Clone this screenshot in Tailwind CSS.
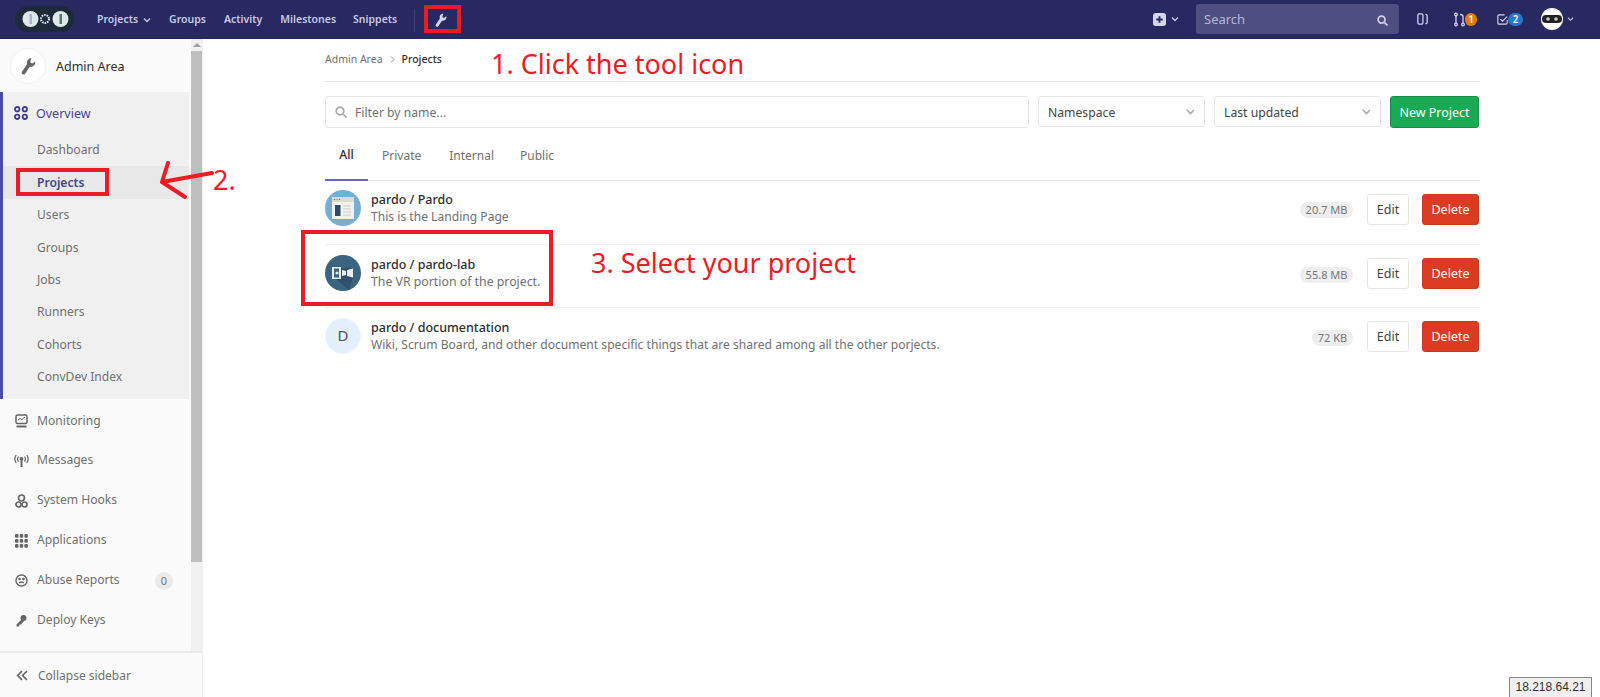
<!DOCTYPE html>
<html><head><meta charset="utf-8"><title>Projects</title>
<script src="https://cdn.jsdelivr.net/npm/@tailwindcss/browser@4"></script></head>
<body class="font-['Noto_Sans','Open_Sans',sans-serif] bg-white overflow-hidden">
<div class="relative w-[1600px] h-[697px] overflow-hidden">
<header class="h-[39px] bg-[#292961] border-b border-[#24245a] flex items-center text-[#c8c8e6] text-[10.500px] font-semibold">
  <svg class="ml-[15px] w-[59px] h-[26px]" viewBox="0 0 59 26"><rect width="59" height="26" rx="13" fill="#1c2a3a"/><circle cx="15.500" cy="13" r="8" fill="#dfe9e8"/><circle cx="45.500" cy="13" r="8" fill="#dfe9e8"/><rect x="14.500" y="8" width="2.500" height="10" fill="#a9b4d8"/><rect x="44.500" y="8" width="2.500" height="10" fill="#4f7a6e"/><circle cx="30" cy="13" r="4" fill="none" stroke="#eef" stroke-width="2" stroke-dasharray="1.500 1"/></svg>
  <nav class="ml-[23px] pt-[2px] flex items-center">
    <span class="flex items-center gap-[5px]">Projects<svg class="w-[8px] h-[6px]" viewBox="0 0 8 6" fill="none" stroke="currentColor" stroke-width="1.300"><path d="M1 1.500l3 3 3-3"/></svg></span>
    <span class="ml-[18px]">Groups</span><span class="ml-[18px]">Activity</span><span class="ml-[18px]">Milestones</span><span class="ml-[17px]">Snippets</span>
    <span class="ml-[17px] w-px h-[23px] bg-[#40407a]"></span>
    <svg class="ml-[20px] w-[12px] h-[14px]" viewBox="0 0 13 15" fill="#d5d5ee"><path d="M9 .5a4 4 0 0 0-3.700 5.300L1 12.300a1.600 1.600 0 0 0 2.600 1.900l3.900-6a4 4 0 0 0 4.800-4.700L9.700 5.300 8 4.200l1-3.700z"/></svg>
  </nav>
  <div class="ml-auto flex items-center">
    <svg class="w-[13px] h-[13px]" viewBox="0 0 14 14"><rect width="14" height="14" rx="3" fill="#d5d5ee"/><path d="M7 3.500v7M3.500 7h7" stroke="#292961" stroke-width="2"/></svg>
    <svg class="ml-[5px] w-[8px] h-[6px]" viewBox="0 0 8 6" fill="none" stroke="#c8c8e6" stroke-width="1.300"><path d="M1 1.500l3 3 3-3"/></svg>
    <div class="ml-[17px] w-[203px] h-[30px] rounded-[3px] bg-[#4e4e80] flex items-center justify-between pl-[8px] pr-[11px] pt-[2px] text-[#b5b5d8] text-[13px] font-normal">Search
      <svg class="w-[11px] h-[11px]" viewBox="0 0 12 12" fill="none" stroke="#d0d0e6" stroke-width="1.800"><circle cx="5" cy="5" r="3.800"/><path d="M8 8l3.500 3.500"/></svg></div>
    <svg class="ml-[18px] w-[11px] h-[14px]" viewBox="0 0 13 14" fill="none" stroke="#d5d5ee" stroke-width="1.500"><rect x="1" y="1" width="6" height="12" rx="1.500"/><path d="M10 1.500c1.500 0 2 .5 2 1.500v8c0 1-.5 1.500-2 1.500"/></svg>
    <svg class="ml-[26px] w-[11px] h-[15px]" viewBox="0 0 11 15" fill="none" stroke="#d5d5ee" stroke-width="1.300"><circle cx="2" cy="2.500" r="1.300"/><circle cx="2" cy="12.500" r="1.300"/><circle cx="9" cy="12.500" r="1.300"/><path d="M2 4v7M9 11V4.500C9 3 8 2.500 6 2.500"/></svg>
    <span class="w-[12px] h-[13px] rounded-full bg-[#e07b10] text-white text-[10px] leading-[13px] text-center">1</span>
    <svg class="ml-[20px] w-[11px] h-[13px]" viewBox="0 0 13 13" fill="none" stroke="#d5d5ee" stroke-width="1.300"><path d="M12 7v3.500a1.500 1.500 0 0 1-1.500 1.500h-8A1.500 1.500 0 0 1 1 10.500v-8A1.500 1.500 0 0 1 2.500 1H9"/><path d="M4 6l2.500 2.500L12 3"/></svg>
    <span class="w-[15px] h-[13px] rounded-full bg-[#1f78d1] text-white text-[10px] leading-[13px] text-center">2</span>
    <svg class="ml-[18px] w-[22px] h-[22px]" viewBox="0 0 22 22"><circle cx="11" cy="11" r="11" fill="#fff"/><rect x="1" y="7" width="20" height="8" rx="4" fill="#222"/><circle cx="7" cy="11" r="1.800" fill="#ccc"/><circle cx="15" cy="11" r="1.800" fill="#ccc"/></svg>
    <svg class="ml-[4px] mr-[26px] w-[7px] h-[6px]" viewBox="0 0 8 6" fill="none" stroke="#c8c8e6" stroke-width="1.300"><path d="M1 1.500l3 3 3-3"/></svg>
  </div>
</header>
<div class="flex h-[658px]">
  <aside class="w-[203px] shrink-0 h-full border-r border-[#f0f0f0] flex flex-col bg-[#fafafa] text-[12.100px] text-[#707070]">
    <div class="flex flex-1 min-h-0">
      <div class="w-[189px] flex flex-col">
        <div class="h-[53px] flex items-center pl-[10px] pt-[1px] gap-[10px] text-[#2e2e2e] text-[12.500px]">
          <span class="w-[36px] h-[36px] rounded-full bg-white border border-[#f0f0f0] flex items-center justify-center"><svg class="w-[15px] h-[18px]" viewBox="0 0 13 15" fill="#666"><path d="M9 .5a4 4 0 0 0-3.700 5.300L1 12.300a1.600 1.600 0 0 0 2.600 1.900l3.900-6a4 4 0 0 0 4.800-4.700L9.700 5.300 8 4.200l1-3.700z"/></svg></span>
          <span class="pt-[2px]">Admin Area</span></div>
        <div class="h-[307px] bg-[#f0f0f0] border-l-[3px] border-[#4b4ba3] flex flex-col">
          <div class="h-[41px] flex items-center pl-[11px] pt-[1px] gap-[8px] text-[#45458f] text-[12.500px]"><svg class="w-[14px] h-[14px]" viewBox="0 0 14 14" fill="none" stroke="#3d3d85" stroke-width="1.800"><circle cx="3.200" cy="3.200" r="2.200"/><circle cx="10.800" cy="3.200" r="2.200"/><circle cx="3.200" cy="10.800" r="2.200"/><circle cx="10.800" cy="10.800" r="2.200"/></svg><span class="pt-[2px]">Overview</span></div>
          <div class="h-[32.500px] flex items-center pt-[2px] pl-[34px]">Dashboard</div>
          <div class="h-[33px] flex items-center pt-[2px] pl-[34px] bg-[#e8e8e8] text-[#45458f] font-semibold">Projects</div>
          <div class="h-[32.500px] flex items-center pl-[34px]">Users</div>
          <div class="h-[32.500px] flex items-center pt-[2px] pl-[34px]">Groups</div>
          <div class="h-[32.500px] flex items-center pl-[34px]">Jobs</div>
          <div class="h-[32.500px] flex items-center pl-[34px]">Runners</div>
          <div class="h-[32.500px] flex items-center pl-[34px]">Cohorts</div>
          <div class="h-[32.500px] flex items-center pl-[34px]">ConvDev Index</div>
        </div>
        <div class="flex flex-col pl-[15px] pt-[2px]">
          <div class="h-[40px] flex items-center gap-[9px]"><svg class="w-[13px] h-[14px] shrink-0" viewBox="0 0 13 14" fill="none" stroke="#666" stroke-width="1.500"><rect x="1" y="1" width="11" height="8.500" rx="1.500"/><path d="M3 6l2-1.500 2 1 3-2.500" stroke-width="1"/><path d="M1.500 12.500h10" stroke-width="2"/></svg>Monitoring</div>
          <div class="h-[39px] flex items-center gap-[8px] -ml-[1px]"><svg class="w-[15px] h-[14px] shrink-0" viewBox="0 0 15 14" fill="none" stroke="#666" stroke-width="1.200"><circle cx="7.500" cy="5" r="1.300" fill="#666"/><path d="M7.500 7v6" stroke-width="2"/><path d="M4.500 2.500a4 4 0 0 0 0 5M10.500 2.500a4 4 0 0 1 0 5M2.200 1a7 7 0 0 0 0 8M12.800 1a7 7 0 0 1 0 8"/></svg>Messages</div>
          <div class="h-[41px] flex items-center gap-[9px]"><svg class="w-[13px] h-[14px] shrink-0" viewBox="0 0 13 14" fill="none" stroke="#666" stroke-width="1.700"><circle cx="6.500" cy="4" r="3"/><circle cx="3.500" cy="10.500" r="2.500"/><circle cx="9.500" cy="10.500" r="2.500"/></svg>System Hooks</div>
          <div class="h-[39px] flex items-center gap-[9px]"><svg class="w-[13px] h-[14px] shrink-0" viewBox="0 0 13 14" fill="#666"><rect x="0" y="0" width="3.500" height="3.800" rx="1"/><rect x="4.700" y="0" width="3.500" height="3.800" rx="1"/><rect x="9.400" y="0" width="3.500" height="3.800" rx="1"/><rect x="0" y="5" width="3.500" height="3.800" rx="1"/><rect x="4.700" y="5" width="3.500" height="3.800" rx="1"/><rect x="9.400" y="5" width="3.500" height="3.800" rx="1"/><rect x="0" y="10" width="3.500" height="3.800" rx="1"/><rect x="4.700" y="10" width="3.500" height="3.800" rx="1"/><rect x="9.400" y="10" width="3.500" height="3.800" rx="1"/></svg>Applications</div>
          <div class="h-[41px] flex items-center gap-[9px]"><svg class="w-[13px] h-[13px] shrink-0" viewBox="0 0 13 13" fill="none" stroke="#666" stroke-width="1.400"><circle cx="6.500" cy="6.500" r="5.500"/><circle cx="4.500" cy="5" r=".6" fill="#666"/><circle cx="8.500" cy="5" r=".6" fill="#666"/><path d="M4.200 9c1.300-1.200 3.300-1.200 4.600 0"/></svg>Abuse Reports<span class="ml-auto mr-[16px] w-[18px] h-[18px] rounded-full bg-[#eaeaea] text-[11px] text-[#777] text-center leading-[18px]">0</span></div>
          <div class="h-[39px] flex items-center gap-[9px]"><svg class="w-[13px] h-[13px] shrink-0" viewBox="0 0 13 13" fill="#666"><circle cx="8.500" cy="4" r="3"/><path d="M7 5L1.500 10.500V12.500h2.500l.5-2h1.500L9 7z"/></svg>Deploy Keys</div>
        </div>
      </div>
      <div class="ml-[2px] w-[11px] bg-[#f0f0f0] flex flex-col">
        <div class="h-[12px] flex items-center justify-center"><span class="w-0 h-0 border-x-[4px] border-x-transparent border-b-[4px] border-b-[#a0a0a0]"></span></div>
        <div class="h-[511px] bg-[#bebebe]"></div>
      </div>
    </div>
    <div class="h-[46px] shrink-0 border-t-2 border-[#ececec] flex items-center pt-[1px] pl-[16px] gap-[10px] text-[12px]"><svg class="w-[12px] h-[11px]" viewBox="0 0 11 10" fill="none" stroke="#666" stroke-width="1.500"><path d="M5.500 1l-4 4 4 4M10 1L6 5l4 4"/></svg>Collapse sidebar</div>
  </aside>
  <main class="ml-[122px] w-[1155px] text-[12.200px]">
    <div class="h-[43px] border-b border-[#e5e5e5] flex items-center text-[10.500px] pb-[1px] text-[#707070]">Admin Area<svg class="mx-[7px] w-[5px] h-[7px]" viewBox="0 0 5 7" fill="none" stroke="#888" stroke-width="1"><path d="M1 .5l3 3-3 3"/></svg><span class="font-medium text-[#2e2e2e]">Projects</span></div>
    <div class="mt-[14px] flex items-start">
      <div class="w-[704px] h-[32px] rounded-[3px] border border-[#e5e5e5] flex items-center pl-[9px] gap-[8px] text-[#707070]"><svg class="w-[12px] h-[12px]" viewBox="0 0 12 12" fill="none" stroke="#aaa" stroke-width="1.700"><circle cx="5" cy="5" r="3.800"/><path d="M8 8l3.500 3.500"/></svg><span class="pt-[2px]">Filter by name...</span></div>
      <div class="ml-[9px] w-[167px] h-[31px] rounded-[3px] border border-[#e5e5e5] flex items-center justify-between px-[9px] text-[#444]"><span class="pt-[3px]">Namespace</span><svg class="w-[9px] h-[6px]" viewBox="0 0 9 6" fill="none" stroke="#aaa" stroke-width="1.700"><path d="M1 1l3.500 3.500L8 1"/></svg></div>
      <div class="ml-[9px] w-[167px] h-[31px] rounded-[3px] border border-[#e5e5e5] flex items-center justify-between px-[9px] text-[#444]"><span class="pt-[3px]">Last updated</span><svg class="w-[9px] h-[6px]" viewBox="0 0 9 6" fill="none" stroke="#aaa" stroke-width="1.700"><path d="M1 1l3.500 3.500L8 1"/></svg></div>
      <div class="ml-[9px] w-[89px] h-[32px] rounded-[3px] bg-[#1aaa55] border border-[#168f48] text-white flex items-center justify-center pt-[2px] text-[12.500px]">New Project</div>
    </div>
    <div class="mt-[10px] h-[43px] border-b border-[#e5e5e5] flex text-[#707070] text-[12px]">
      <span class="w-[43px] h-[43px] flex items-center justify-center pb-[7px] text-[#2e2e2e] font-medium border-b-2 border-[#6666c4]">All</span>
      <span class="ml-[14px] h-[43px] flex items-center pb-[8px]">Private</span>
      <span class="ml-[28px] h-[43px] flex items-center pb-[8px]">Internal</span>
      <span class="ml-[26px] h-[43px] flex items-center pb-[8px]">Public</span>
    </div>
    <div class="h-[64px] border-b border-[#f0f0f0] flex items-center pb-[9px] pr-[1px]">
      <svg class="w-[36px] h-[36px] shrink-0" viewBox="0 0 36 36"><circle cx="18" cy="18" r="18" fill="#74b0d4"/><rect x="7" y="7" width="22" height="22" rx="1" fill="#f2f2ea"/><rect x="7" y="7" width="22" height="5" fill="#dcdccf"/><rect x="10" y="15" width="5.500" height="11" fill="#2c4a6a"/><path d="M18 16h8M18 19h8M18 22h8M18 25h8" stroke="#d0d0c4"/><circle cx="9.500" cy="9.500" r=".8" fill="#d05050"/><circle cx="12" cy="9.500" r=".8" fill="#d09050"/><circle cx="14.500" cy="9.500" r=".8" fill="#50a060"/></svg>
      <div class="ml-[10px] flex flex-col leading-[17px]"><span class="font-medium text-[#2e2e2e] text-[12.500px]">pardo / Pardo</span><span class="text-[#707070] text-[12.100px]">This is the Landing Page</span></div>
      <span class="ml-auto mt-[4px] h-[16px] w-[53px] rounded-full bg-[#eee] text-[#777] text-[11px] leading-[16px] text-center">20.7 MB</span>
      <span class="ml-[14px] mt-[2px] w-[42px] h-[31px] rounded-[3px] border border-[#e5e5e5] flex items-center justify-center pt-[2px] text-[#444] text-[12.500px]">Edit</span>
      <span class="ml-[13px] mt-[2px] w-[57px] h-[31px] rounded-[3px] bg-[#db3b21] border border-[#c93a22] flex items-center justify-center pt-[2px] text-white text-[12.500px]">Delete</span>
    </div>
    <div class="h-[63px] border-b border-[#f0f0f0] flex items-center pb-[7px] pr-[1px]">
      <svg class="w-[36px] h-[36px] shrink-0" viewBox="0 0 36 36"><circle cx="18" cy="18" r="18" fill="#3a6480"/><path d="M10 13h18v10l-4 12-14-12z" fill="#2f506c"/><rect x="7" y="12" width="9" height="12" fill="#e8eef2"/><rect x="9" y="13.500" width="5" height="9" fill="#3a6480"/><circle cx="12" cy="18" r="1.600" fill="#e8eef2"/><path d="M17 15l4 1v4l-4 1zM22 15l6-1.500v9L22 21z" fill="#e8eef2"/></svg>
      <div class="ml-[10px] flex flex-col leading-[17px]"><span class="font-medium text-[#2e2e2e] text-[12.500px]">pardo / pardo-lab</span><span class="text-[#707070] text-[12.300px]">The VR portion of the project.</span></div>
      <span class="ml-auto mt-[4px] h-[16px] w-[53px] rounded-full bg-[#eee] text-[#777] text-[11px] leading-[16px] text-center">55.8 MB</span>
      <span class="ml-[14px] mt-[2px] w-[42px] h-[31px] rounded-[3px] border border-[#e5e5e5] flex items-center justify-center pt-[2px] text-[#444] text-[12.500px]">Edit</span>
      <span class="ml-[13px] mt-[2px] w-[57px] h-[31px] rounded-[3px] bg-[#db3b21] border border-[#c93a22] flex items-center justify-center pt-[2px] text-white text-[12.500px]">Delete</span>
    </div>
    <div class="h-[63px] flex items-center pb-[8px] pr-[1px]">
      <span class="w-[36px] h-[36px] shrink-0 rounded-full bg-[#e3f0fc] border border-[#eef4fa] flex items-center justify-center text-[#555] text-[15px]">D</span>
      <div class="ml-[10px] flex flex-col leading-[17px]"><span class="font-medium text-[#2e2e2e] text-[12.500px]">pardo / documentation</span><span class="text-[#707070] text-[12.100px]">Wiki, Scrum Board, and other document specific things that are shared among all the other porjects.</span></div>
      <span class="ml-auto mt-[4px] h-[16px] w-[41px] rounded-full bg-[#eee] text-[#777] text-[11px] leading-[16px] text-center">72 KB</span>
      <span class="ml-[14px] mt-[2px] w-[42px] h-[31px] rounded-[3px] border border-[#e5e5e5] flex items-center justify-center pt-[2px] text-[#444] text-[12.500px]">Edit</span>
      <span class="ml-[13px] mt-[2px] w-[57px] h-[31px] rounded-[3px] bg-[#db3b21] border border-[#c93a22] flex items-center justify-center pt-[2px] text-white text-[12.500px]">Delete</span>
    </div>
  </main>
</div>
<!-- annotations -->
<div class="absolute left-[424px] top-[5px] w-[37px] h-[28px] border-[4px] border-[#ed1c24]"></div>
<div class="absolute left-[16px] top-[168px] w-[93px] h-[28px] border-[4px] border-[#ed1c24]"></div>
<div class="absolute left-[301px] top-[230px] w-[252px] h-[76px] border-[4px] border-[#ed1c24]"></div>
<div class="absolute left-[491px] top-[47px] text-[#ed1c24] text-[27px] leading-[34px] whitespace-nowrap">1. Click the tool icon</div>
<div class="absolute left-[213px] top-[163px] text-[#ed1c24] text-[27px] leading-[34px] whitespace-nowrap">2.</div>
<div class="absolute left-[591px] top-[246px] text-[#ed1c24] text-[27px] leading-[34px] whitespace-nowrap">3. Select your project</div>
<svg class="absolute left-[158px] top-[160px] w-[56px] h-[42px]" viewBox="0 0 56 42" fill="none" stroke="#ed1c24" stroke-width="4" stroke-linecap="round" stroke-linejoin="round"><path d="M10 3L4 22l50-9M4 22l23 15"/></svg>
<div class="absolute left-[1509px] top-[677px] w-[83px] h-[20px] bg-[#f0f0f0] border border-[#888] border-b-0 text-[12px] leading-[19px] text-center font-['Liberation_Sans'] text-[#333]">18.218.64.21</div>
</div>
</body></html>
